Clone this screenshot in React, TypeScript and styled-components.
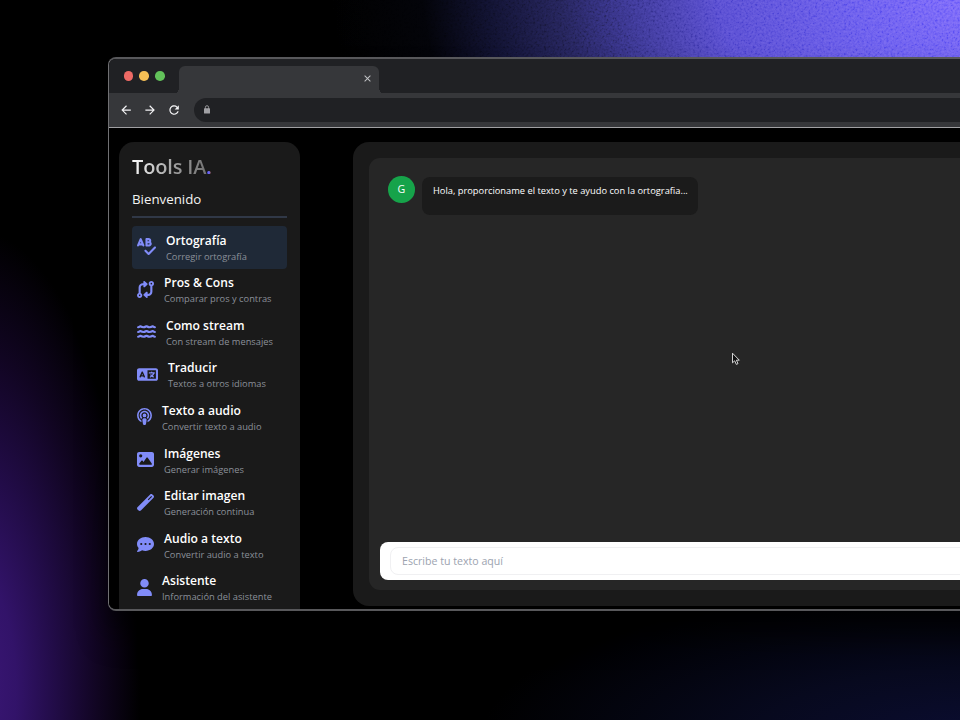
import React from 'react';
import styled, { createGlobalStyle } from 'styled-components';
import type { IconType } from 'react-icons';
import {
  FaSpellCheck,
  FaCodeCompare,
  FaWater,
  FaLanguage,
  FaPodcast,
  FaImage,
  FaWandMagic,
  FaCommentDots,
  FaUser,
} from 'react-icons/fa6';
import { MdArrowBack, MdArrowForward, MdRefresh, MdClose } from 'react-icons/md';

const GlobalStyle = createGlobalStyle`
  * { box-sizing: border-box; }
  body {
    margin: 0;
    background: #000;
    font-family: 'Open Sans', 'Noto Sans', sans-serif;
    overflow: hidden;
  }
`;

const Desktop = styled.div`
  position: relative;
  width: 960px;
  height: 720px;
  padding: 57px 0 0 108px;
  overflow: hidden;
  background:
    radial-gradient(ellipse 600px 440px at 980px -20px, #806cff 0%, #6b5eee 22%, #594ed2 44%, #3e3997 58%, #25245a 70%, #111230 82%, rgba(4, 5, 14, 0.6) 93%, rgba(0, 0, 0, 0) 108%),
    radial-gradient(ellipse 165px 460px at -25px 690px, #3c1777 0%, #321369 25%, #220c48 48%, #110522 74%, rgba(0, 0, 0, 0) 100%),
    radial-gradient(ellipse 500px 160px at 980px 740px, #0b0d32 0%, #07091e 45%, rgba(0, 0, 0, 0) 100%),
    #000;
`;

const Grain = styled.svg`
  position: absolute;
  left: 0;
  top: 0;
  width: 960px;
  height: 58px;
  opacity: 0.2;
  mix-blend-mode: overlay;
`;

const Browser = styled.section`
  position: relative;
  display: flex;
  flex-direction: column;
  width: 1000px;
  height: 554px;
  border: 2px solid #58585b;
  border-left: 1px solid #707073;
  border-radius: 8px;
  background: #000;
  overflow: hidden;
  box-shadow: 0 24px 32px -4px rgba(0, 0, 0, 0.7);
`;

const TabStrip = styled.div`
  display: flex;
  flex: none;
  height: 34px;
  padding: 7px 0 0 14.5px;
  background: #202124;
`;

const Lights = styled.div`
  display: flex;
  gap: 6.2px;
  padding-top: 5px;
  width: 55.5px;
`;

const Light = styled.span<{ $color: string }>`
  width: 9.6px;
  height: 9.6px;
  border-radius: 50%;
  background: ${(p) => p.$color};
`;

const Tab = styled.div`
  position: relative;
  display: flex;
  align-items: center;
  justify-content: flex-end;
  width: 200px;
  height: 27px;
  padding: 0 6px 2px 0;
  border-radius: 6px 6px 0 0;
  background: #36373a;
  color: #c4c5c8;
  font-size: 11px;
  &::before,
  &::after {
    content: '';
    position: absolute;
    bottom: 0;
    width: 3px;
    height: 6px;
  }
  &::before {
    left: -3px;
    background: radial-gradient(ellipse 3px 6px at 0 0, transparent 98%, #36373a 100%);
  }
  &::after {
    right: -3px;
    background: radial-gradient(ellipse 3px 6px at 100% 0, transparent 98%, #36373a 100%);
  }
`;

const Toolbar = styled.div`
  display: flex;
  flex: none;
  align-items: center;
  height: 35px;
  padding-left: 10px;
  background: #36373a;
  border-bottom: 1px solid #a0a0a3;
`;

const NavIcons = styled.div`
  display: flex;
  gap: 10px;
  width: 75px;
  color: #f3f3f5;
  font-size: 14.2px;
`;

const Address = styled.div`
  display: flex;
  flex: 1;
  align-items: center;
  height: 24px;
  padding: 0 0 2px 10px;
  border-radius: 12px 0 0 12px;
  background: #202124;
`;

const Page = styled.div`
  display: flex;
  flex: 1;
  align-items: flex-start;
  min-height: 0;
  padding: 14px 0 0 10px;
  background: #000;
`;

const Sidebar = styled.nav`
  flex: none;
  width: 181px;
  height: 490px;
  margin-right: 53px;
  padding: 11px 13px;
  border-radius: 15px 15px 0 0;
  background: #1a1a1a;
`;

const Brand = styled.h1`
  width: max-content;
  margin: 0;
  font-size: 20px;
  font-weight: 600;
  line-height: 27px;
  letter-spacing: -0.15px;
  background: linear-gradient(100deg, #ffffff 0%, #a3a3a3 50%, #686868 100%);
  background-clip: text;
  -webkit-background-clip: text;
  color: transparent;
`;

const Dot = styled.span`
  color: #6f62f2;
`;

const Welcome = styled.p`
  margin: 10px 0 8px;
  color: #f3f3f3;
  font-size: 13.3px;
  line-height: 18px;
`;

const Rule = styled.hr`
  height: 2px;
  margin: 0 0 8px;
  border: 0;
  background: #303847;
`;

const Item = styled.a<{ $active?: boolean }>`
  display: flex;
  align-items: center;
  height: 42.55px;
  padding: 0 5px;
  border-radius: 4px;
  background: ${(p) => (p.$active ? '#1f2937' : 'transparent')};
`;

const ItemIcon = styled.span<{ $width: number }>`
  display: flex;
  flex: none;
  width: ${(p) => p.$width}px;
  margin-right: 10px;
  padding-bottom: 1px;
  color: #818cf8;
  svg {
    width: ${(p) => p.$width}px;
    height: 17px;
  }
`;

const ItemText = styled.span`
  display: flex;
  flex-direction: column;
  padding-top: 2px;
  white-space: nowrap;
`;

const ItemTitle = styled.span`
  color: #fff;
  font-size: 12.1px;
  font-weight: 600;
  line-height: 16px;
`;

const ItemHint = styled.span`
  color: #8b9099;
  font-size: 9.3px;
  line-height: 15px;
`;

const Shell = styled.main`
  flex: none;
  width: 700px;
  height: 464px;
  padding: 16px;
  border-radius: 16px;
  background: #1a1a1a;
`;

const Chat = styled.div`
  display: flex;
  flex-direction: column;
  justify-content: space-between;
  height: 432px;
  padding: 18px 0 10.5px 11px;
  border-radius: 11px;
  background: #262626;
`;

const Message = styled.div`
  display: flex;
  gap: 7.5px;
  padding-left: 8px;
`;

const Avatar = styled.span`
  display: flex;
  align-items: center;
  justify-content: center;
  width: 26.5px;
  height: 26.5px;
  border-radius: 50%;
  background: #16a34a;
  color: #fff;
  font-size: 10.6px;
`;

const Bubble = styled.div`
  width: 276px;
  height: 38px;
  margin-top: 1px;
  padding: 7px 11px;
  border-radius: 8px;
  background: #1b1b1b;
  color: #fff;
  font-size: 9.3px;
  line-height: 14px;
  white-space: nowrap;
`;

const Composer = styled.div`
  height: 37.5px;
  padding: 4.5px 10px;
  border-radius: 8px;
  background: #fff;
`;

const Field = styled.div`
  display: flex;
  align-items: center;
  height: 28px;
  padding-left: 11px;
  border: 1px solid #f0f0f2;
  border-radius: 8px;
  color: #9ca3af;
  font-size: 10.6px;
`;

const Lock = styled.svg`
  width: 6px;
  height: 9px;
`;

const Pointer = styled.svg`
  position: absolute;
  left: 731px;
  top: 352px;
  width: 10px;
  height: 14px;
`;

interface Tool {
  icon: IconType;
  width: number;
  title: string;
  hint: string;
}

const tools: Tool[] = [
  { icon: FaSpellCheck, width: 19, title: 'Ortografía', hint: 'Corregir ortografía' },
  { icon: FaCodeCompare, width: 17, title: 'Pros & Cons', hint: 'Comparar pros y contras' },
  { icon: FaWater, width: 19, title: 'Como stream', hint: 'Con stream de mensajes' },
  { icon: FaLanguage, width: 21, title: 'Traducir', hint: 'Textos a otros idiomas' },
  { icon: FaPodcast, width: 15, title: 'Texto a audio', hint: 'Convertir texto a audio' },
  { icon: FaImage, width: 17, title: 'Imágenes', hint: 'Generar imágenes' },
  { icon: FaWandMagic, width: 17, title: 'Editar imagen', hint: 'Generación continua' },
  { icon: FaCommentDots, width: 17, title: 'Audio a texto', hint: 'Convertir audio a texto' },
  { icon: FaUser, width: 15, title: 'Asistente', hint: 'Información del asistente' },
];

export default function App() {
  return (
    <>
      <GlobalStyle />
      <Desktop>
        <Grain>
          <filter id="grain" x="0" y="0" width="100%" height="100%">
            <feTurbulence type="fractalNoise" baseFrequency="0.45" numOctaves={2} />
            <feColorMatrix
              type="matrix"
              values="1.4 0 0 0 -0.35  1.4 0 0 0 -0.35  1.4 0 0 0 -0.35  0 0 0 0 1"
            />
          </filter>
          <rect width="960" height="58" filter="url(#grain)" />
        </Grain>
        <Browser>
          <TabStrip>
            <Lights>
              <Light $color="#ed6a65" />
              <Light $color="#f5bf55" />
              <Light $color="#62c25a" />
            </Lights>
            <Tab>
              <MdClose />
            </Tab>
          </TabStrip>
          <Toolbar>
            <NavIcons>
              <MdArrowBack />
              <MdArrowForward />
              <MdRefresh />
            </NavIcons>
            <Address>
              <Lock viewBox="0 0 6 9">
                <path d="M1.4 4V2.3a1.6 1.6 0 0 1 3.2 0V4" fill="none" stroke="#a0a0a4" strokeWidth="0.9" />
                <rect y="3.2" width="6" height="5.3" rx="0.5" fill="#a0a0a4" />
              </Lock>
            </Address>
          </Toolbar>
          <Page>
            <Sidebar>
              <Brand>
                Tools IA<Dot>.</Dot>
              </Brand>
              <Welcome>Bienvenido</Welcome>
              <Rule />
              {tools.map(({ icon: Icon, width, title, hint }, i) => (
                <Item key={title} $active={i === 0}>
                  <ItemIcon $width={width}>
                    <Icon />
                  </ItemIcon>
                  <ItemText>
                    <ItemTitle>{title}</ItemTitle>
                    <ItemHint>{hint}</ItemHint>
                  </ItemText>
                </Item>
              ))}
            </Sidebar>
            <Shell>
              <Chat>
                <Message>
                  <Avatar>G</Avatar>
                  <Bubble>Hola, proporcioname el texto y te ayudo con la ortografia...</Bubble>
                </Message>
                <Composer>
                  <Field>Escribe tu texto aquí</Field>
                </Composer>
              </Chat>
            </Shell>
          </Page>
        </Browser>
        <Pointer viewBox="0 0 10 14">
          <path
            d="M1.5 1.2v9.6l2.2-2 1.6 3.6 1.7-.8-1.6-3.4h2.9z"
            fill="#111"
            stroke="#e8e8e8"
            strokeWidth="0.9"
          />
        </Pointer>
      </Desktop>
    </>
  );
}
